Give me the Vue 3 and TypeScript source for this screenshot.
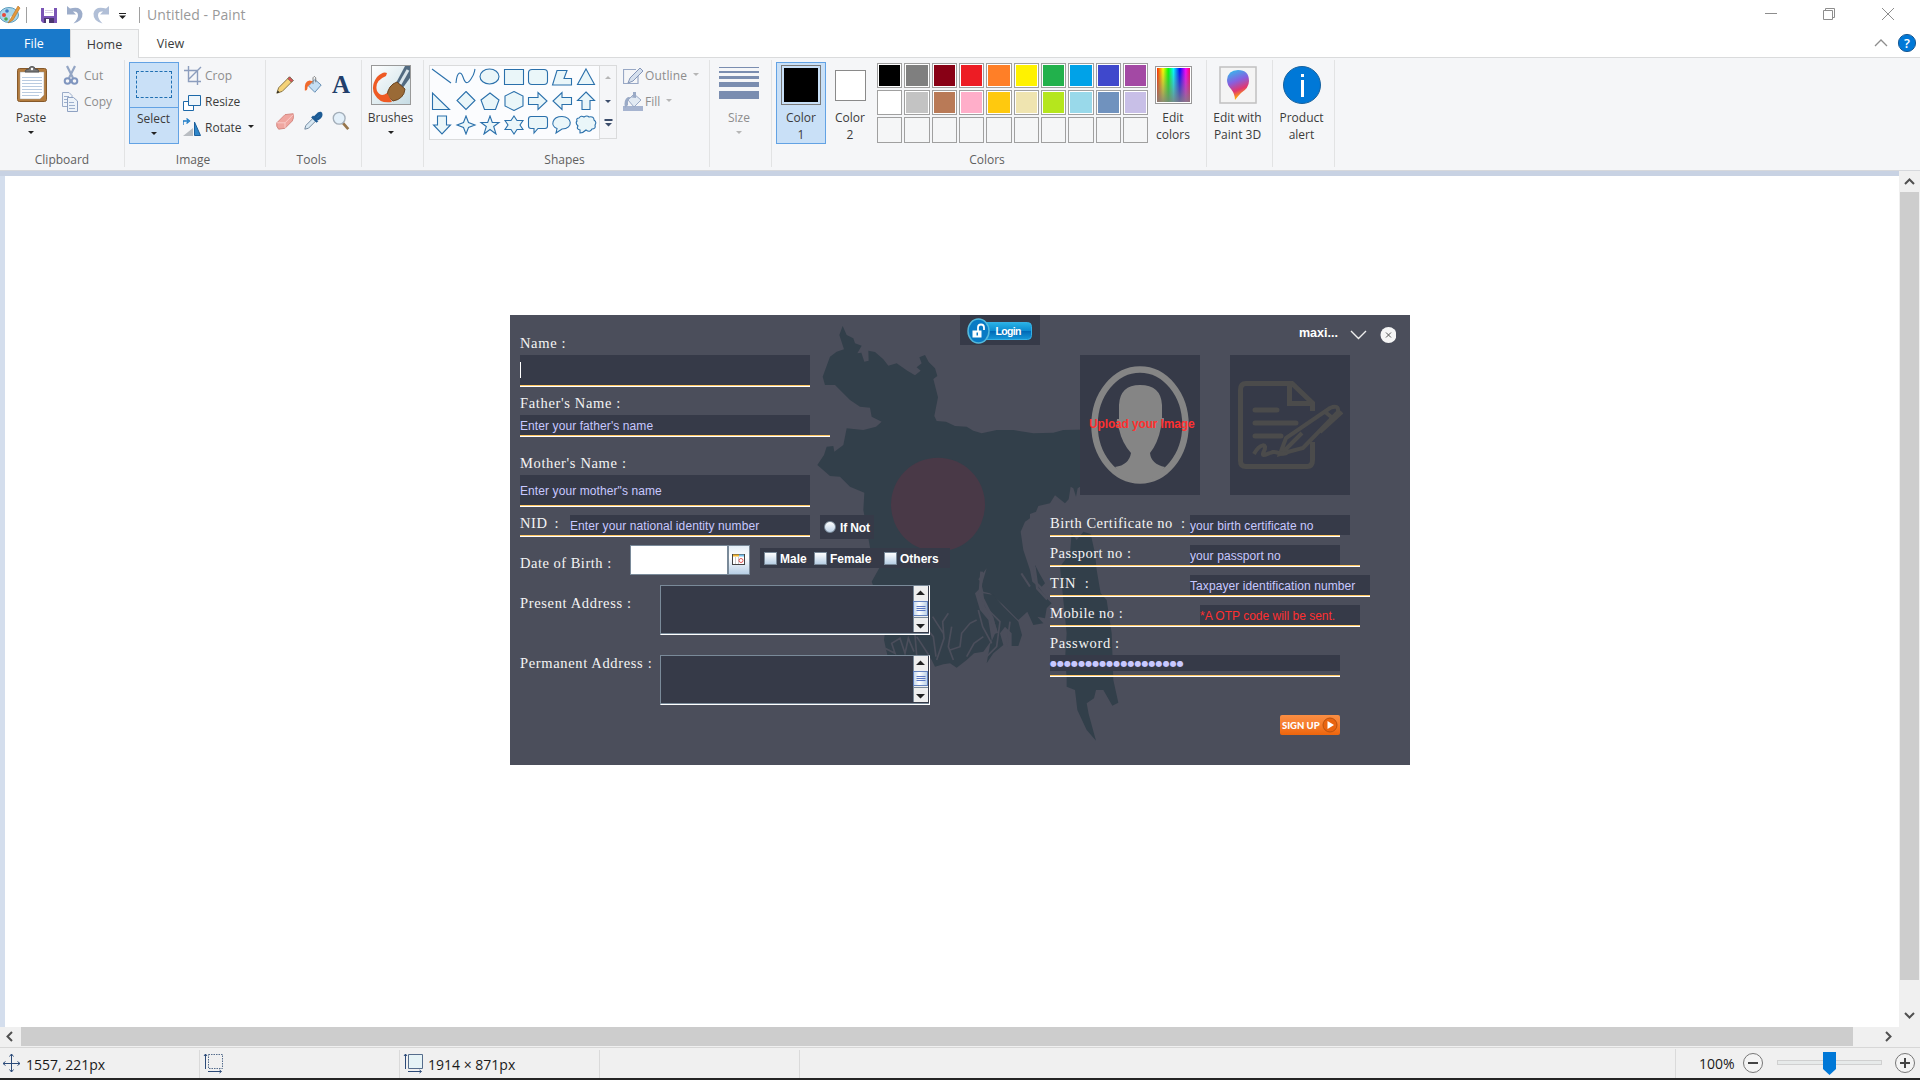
<script setup lang="ts">
interface Field {
  label: string
  hint: string
  fieldX: number
  fieldW: number
  lineW: number
  tight?: boolean
  spread?: boolean
  warn?: boolean
}

const colors: string[][] = [
  ['#000000', '#7f7f7f', '#880015', '#ed1c24', '#ff7f27', '#fff200', '#22b14c', '#00a2e8', '#3f48cc', '#a349a4'],
  ['#ffffff', '#c3c3c3', '#b97a57', '#ffaec9', '#ffc90e', '#efe4b0', '#b5e61d', '#99d9ea', '#7092be', '#c8bfe7'],
  ['', '', '', '', '', '', '', '', '', ''],
]

const shapes: string[] = [
  'M1 2L20 16',
  'M1 16C2 4 6 4 8 10S12 18 16 12S19 6 20 2',
  'M1 9.500a9.500 7.500 0 1 0 19 0a9.500 7.500 0 1 0 -19 0',
  'M1.500 2.500H20.500V17.500H1.500Z',
  'M5 2.500H17Q20.500 2.500 20.500 6V14Q20.500 17.500 17 17.500H5Q1.500 17.500 1.500 14V6Q1.500 2.500 5 2.500Z',
  'M6 3.500H16L13 11.500H20.500V18H1.500Z',
  'M11 2L19.500 17.500H2.500Z',
  'M1.500 2V18.500H18.500Z',
  'M11 0.500L20 9.500L11 18.500L2 9.500Z',
  'M11 2L20 9L16.500 18.500H5.500L2 9Z',
  'M11 0.500L20 5V15L11 19.500L2 15V5Z',
  'M1.500 6.500H11V1.500L20 10L11 18.500V13.500H1.500Z',
  'M20.500 6.500H11V1.500L2 10L11 18.500V13.500H20.500Z',
  'M11 1L19.500 9.500H15V18.500H7V9.500H2.500Z',
  'M6.500 1H15.500V10H19.500L11 19L2.500 10H6.500Z',
  'M11 1L13.500 7.500L20 10L13.500 12.500L11 19L8.500 12.500L2 10L8.500 7.500Z',
  'M11 1L13.300 7.500H20L14.700 11.500L17 19L11 14.500L5 19L7.300 11.500L2 7.500H8.700Z',
  'M11 1L14 5.500H20L17 10L20 14.500H14L11 19L8 14.500H2L5 10L2 5.500H8Z',
  'M4 1.500H18Q20.500 1.500 20.500 4V11Q20.500 13.500 18 13.500H11L7 18V13.500H4Q1.500 13.500 1.500 11V4Q1.500 1.500 4 1.500Z',
  'M5 18L6 13.500C-1 11 1 1.500 11 1.500S23 13.500 11 14Z',
  'M4 3Q6 0 9 2Q12 0 14 2Q19 1 19 5Q22 7 20 10Q21 14 17 14Q15 18 11 15Q8 18 5 18L5 15Q1 14 3 11Q0 8 2 6Q1 3 4 3Z',
]

const rightFields: Field[] = [
  { label: 'Birth Certificate no  :', hint: 'your birth certificate no', fieldX: 140, fieldW: 160, lineW: 290, tight: true },
  { label: 'Passport no :', hint: 'your passport no', fieldX: 140, fieldW: 150, lineW: 310, tight: true },
  { label: 'TIN  :', hint: 'Taxpayer identification number', fieldX: 140, fieldW: 180, lineW: 320 },
  { label: 'Mobile no :', hint: '*A OTP code will be sent.', fieldX: 150, fieldW: 160, lineW: 310, tight: true, warn: true },
]

const addresses: string[] = ['Present Address :', 'Permanent Address :']
const genders: { name: string; width: number }[] = [
  { name: 'Male', width: 50 },
  { name: 'Female', width: 70 },
  { name: 'Others', width: 66 },
]
const passwordDots = '●'.repeat(19)
</script>

<template>
  <div class="window">
    <header class="titlebar">
      <svg class="quick" width="140" height="29" viewBox="0 0 140 29">
        <ellipse cx="9" cy="15" rx="9.500" ry="7.500" fill="#a9d6ea" stroke="#5c9dbd" />
        <circle cx="4" cy="15" r="2" fill="#e8493a" /><circle cx="7" cy="11" r="1.800" fill="#3e76c4" />
        <circle cx="6" cy="19" r="1.800" fill="#49a84f" /><circle cx="12" cy="18" r="2" fill="#fff" />
        <path d="M18 6L10 20L8 23L13 20L20 8Z" fill="#e49a3d" stroke="#b66f22" stroke-width=".6" />
        <path d="M26.500 7V23M139.500 7V23" stroke="#a0a0a0" />
        <path d="M41 8H57V23H43L41 21Z" fill="#7a55b5" /><rect x="44" y="8" width="10" height="8" fill="#fff" />
        <path d="M45 10.500H53M45 12.500H53" stroke="#d8d0e4" /><rect x="44" y="18" width="10" height="5" fill="#4b3770" /><rect x="46" y="19" width="3" height="4" fill="#fff" />
        <path d="M67 6V14.500H76L73 11.500Q78 11 78 15.500Q78 19 73.500 23.500Q83 21 82.500 13.500Q81 5.500 70 8.500Z" fill="#9dadca" />
        <path d="M109 6V14.500H100L103 11.500Q98 11 98 15.500Q98 19 102.500 23.500Q93 21 93.500 13.500Q95 5.500 106 8.500Z" fill="#b1bfd7" />
        <path d="M119 13.500H126" stroke="#222" /><path d="M119 15.500H126L122.500 19Z" fill="#222" />
      </svg>
      <span class="title">Untitled - Paint</span>
      <svg class="controls" width="150" height="29" viewBox="0 0 150 29" fill="none" stroke="#8d8d8d">
        <path d="M5 13.500H17M63.500 10.500H72.500V19.500H63.500ZM65.500 10V8.500H74.500V17.500H73M122 8L134 20M134 8L122 20" />
      </svg>
    </header>

    <nav class="tabs">
      <span class="tab file">File</span>
      <span class="tab home">Home</span>
      <span class="tab view">View</span>
      <svg class="help" width="50" height="28" viewBox="0 0 50 28">
        <path d="M5 17L11 11L17 17" fill="none" stroke="#8d8d8d" stroke-width="1.300" />
        <circle cx="37" cy="14" r="8.600" fill="#0078d7" stroke="#1a5a94" />
        <text x="37" y="19" text-anchor="middle" fill="#fff" font-size="13" font-weight="600">?</text>
      </svg>
    </nav>

    <section class="ribbon">
      <div class="group" style="width: 125px">
        <div class="tools-row">
          <div class="big paste">
            <svg width="34" height="44" viewBox="0 0 34 44">
              <rect x="3.500" y="5.500" width="29" height="33" rx="2" fill="#b47c3e" stroke="#86592a" />
              <path d="M6 9H30V32L26 36H6Z" fill="#fff" stroke="#999" stroke-width=".5" />
              <path d="M8 14.500H28M8 17.500H28M8 20.500H28M8 23.500H28M8 26.500H28M8 29.500H28M8 32.500H25" stroke="#b9cbe0" />
              <path d="M11 9Q11 6 15 6Q15 3.500 18 3.500T21 6Q25 6 25 9Z" fill="#777" stroke="#555" />
              <circle cx="18" cy="6" r="1.200" fill="#fff" />
            </svg>
            <span>Paste</span><i class="arrow"></i>
          </div>
          <div class="small-list dim">
            <span><svg width="22" height="22" viewBox="0 0 22 22"><path d="M5 1L11 13M13 1L7 13" stroke="#93a5c4" stroke-width="2.200" /><circle cx="5.500" cy="16" r="2.800" fill="none" stroke="#8096bf" stroke-width="2" /><circle cx="12.500" cy="16" r="2.800" fill="none" stroke="#8096bf" stroke-width="2" /></svg>Cut</span>
            <span><svg width="22" height="22" viewBox="0 0 22 22"><path d="M.5 1.500H7L10 4.500V15.500H.5Z" fill="#f1f5fa" stroke="#9bacc8" /><path d="M5.500 6.500H11.500L15.500 10V20.500H5.500Z" fill="#edf3f9" stroke="#8ea1c2" /><path d="M2 5.500H7M2 8.500H5M2 11.500H5M7 11.500H12M7 14.500H13M7 17.500H13" stroke="#9db0cd" /></svg>Copy</span>
          </div>
        </div>
        <div class="caption">Clipboard</div>
      </div>

      <div class="group" style="width: 141px">
        <div class="tools-row">
          <div class="select">
            <div class="select-top"><i></i></div>
            <span>Select</span><i class="arrow"></i>
          </div>
          <div class="small-list image">
            <span class="dim"><svg width="22" height="22" viewBox="0 0 22 22" fill="none" stroke="#8c9dbd"><path d="M5.500 1V16.500H18M1 5.500H14.500V20M6 14L18 2" stroke-width="1.400" /></svg>Crop</span>
            <span><svg width="22" height="22" viewBox="0 0 22 22" stroke="#1c68a8"><path d="M.5 10.500H10.500V19.500H.5Z" fill="#fff" /><path d="M5.500 4.500H17.500V14.500H5.500Z" fill="#eef5fa" /></svg>Resize</span>
            <span><svg width="22" height="22" viewBox="0 0 22 22"><path d="M0 19L10 11V19Z" fill="#b9bdc2" /><path d="M11.500 5V18.500H17.500Z" fill="#2f86c9" stroke="#1c5f9c" /><path d="M0 8V4H5M3.500 1.500L6.500 4L3.500 6.500" fill="none" stroke="#1c7bc6" stroke-width="1.400" /></svg>Rotate<i class="arrow side"></i></span>
          </div>
        </div>
        <div class="caption shifted">Image</div>
      </div>

      <div class="group" style="width: 96px">
        <div class="tool-grid">
          <svg viewBox="0 0 22 22"><path d="M2 20L4 14L16 2L20 6L8 18Z" fill="#f5d277" stroke="#7d6a3a" /><path d="M14 4L16 2L20 6L18 8Z" fill="#d85757" stroke="#555" stroke-width=".6" /><path d="M2 20L3 17L5 19Z" fill="#222" /></svg>
          <svg viewBox="0 0 22 22"><path d="M6 12L13 5L20 11L13 19Z" fill="#c6e0f5" stroke="#5c86ad" /><path d="M7 6Q1 7 2 17Q5 18 5 13L11 7Z" fill="#f06a2c" /><path d="M11 10V3Q12.500 0 14 3V8" fill="none" stroke="#777" /></svg>
          <span class="letter">A</span>
          <svg viewBox="0 0 22 22"><path d="M2 13L11 4L20 3Q21 8 19 11L11 19L4 20Q1 17 2 13Z" fill="#f0a6a0" stroke="#d2827b" /><path d="M2 13L11 13L11 19M11 13L20 4" stroke="#fbd0cc" fill="none" /></svg>
          <svg viewBox="0 0 22 22"><path d="M2 20L3 16L11 8L14 11L6 19Z" fill="#d8e8f3" stroke="#6b8299" /><path d="M10 6L16 12M12 8L17 3Q20 1 20 4T14 10Z" fill="#2570b0" stroke="#1d5b94" stroke-width="3" /></svg>
          <svg viewBox="0 0 22 22"><path d="M13 13L19 20" stroke="#96754b" stroke-width="3" /><circle cx="9" cy="8" r="6.500" fill="#e3f0fa" stroke="#a3aeb9" stroke-width="1.500" /></svg>
        </div>
        <div class="caption shifted">Tools</div>
      </div>

      <div class="group" style="width: 62px">
        <div class="big brushes">
          <svg width="40" height="44" viewBox="0 0 40 44">
            <defs><linearGradient id="brush-bg" x1="0" y1="0" x2="1" y2="1"><stop offset="0" stop-color="#fff" /><stop offset="1" stop-color="#c6dce4" /></linearGradient></defs>
            <rect x=".5" y="2.500" width="39" height="39" fill="url(#brush-bg)" stroke="#999" />
            <path d="M25 20L34 3H39V15L31 26Z" fill="#526a80" /><path d="M29 21L37 7" stroke="#d9e4ea" stroke-width="3" />
            <path d="M16 33Q17 22 26 19L34 26Q33 36 22 38Z" fill="#9a6a36" stroke="#6b4520" />
            <path d="M16 10Q12 8 6 14Q-1 24 4 32Q9 41 21 39L16 30Q10 35 6 28Q3 18 15 13Z" fill="#ee5a24" />
          </svg>
          <span>Brushes</span><i class="arrow"></i>
        </div>
      </div>

      <div class="group" style="width: 286px">
        <div class="tools-row shapes-row">
          <div class="shape-box">
            <svg v-for="(d, i) in shapes" :key="i" viewBox="0 0 22 20" :fill="i < 2 ? 'none' : '#eaf6f9'" stroke="#2a70ab" stroke-width="1.100"><path :d="d" /></svg>
          </div>
          <div class="shape-scroll">
            <i class="arrow up"></i><i class="arrow navy"></i>
            <svg width="9" height="8" viewBox="0 0 9 8" fill="#3c4d6b"><path d="M.5 0H8.500V2H.5ZM1 4H8L4.500 7.500Z" /></svg>
          </div>
          <div class="small-list outline dim">
            <span><svg width="22" height="22" viewBox="0 0 22 22"><path d="M13 4.500H.5V18.500H15V9" fill="none" stroke="#98a8c5" stroke-width="1.200" /><path d="M5 18L7 13L17 3L20 6L10 16Z" fill="#d6e0ed" stroke="#8496b8" /></svg>Outline<i class="arrow grey"></i></span>
            <span><svg width="22" height="22" viewBox="0 0 22 22"><path d="M0 15H20V20H0Z" fill="#a6b4d0" /><path d="M5 9L11 3L18 9L11 16Z" fill="#e2eaf3" stroke="#9aaac6" /><path d="M5 6Q0 9 2 17L5 14V9L10 5V1H13V7" fill="#9aaac6" /></svg>Fill<i class="arrow grey"></i></span>
          </div>
        </div>
        <div class="caption shapes-caption">Shapes</div>
      </div>

      <div class="group" style="width: 62px">
        <div class="big size dim">
          <svg width="40" height="44" viewBox="0 0 40 44" fill="#7a8db0"><path d="M0 4h40v1H0zM0 8h40v2H0zM0 13h40v3H0zM0 19h40v5H0zM0 28h40v8H0z" /></svg>
          <span>Size</span><i class="arrow grey"></i>
        </div>
      </div>

      <div class="group" style="width: 435px">
        <div class="tools-row">
          <div class="color-btn active"><div class="chip c1"><i></i></div><span>Color<br />1</span></div>
          <div class="color-btn"><div class="chip c2"></div><span>Color<br />2</span></div>
          <div class="palette">
            <template v-for="(row, r) in colors" :key="r">
              <i v-for="(c, k) in row" :key="k" class="cell"><b :style="{ background: c || '#f5f6f7' }" :class="{ blank: !c }"></b></i>
            </template>
          </div>
          <div class="wide-btn edit-colors"><i class="spectrum"></i><span>Edit<br />colors</span></div>
        </div>
        <div class="caption shifted">Colors</div>
      </div>

      <div class="group" style="width: 66px">
        <div class="wide-btn pulled">
          <svg width="38" height="38" viewBox="0 0 38 38">
            <defs>
              <linearGradient id="p3d" x1="0" y1="0" x2=".3" y2="1"><stop offset="0" stop-color="#28c7ee" /><stop offset=".45" stop-color="#8660e0" /><stop offset=".75" stop-color="#e2366f" /><stop offset="1" stop-color="#ffb400" /></linearGradient>
            </defs>
            <rect x="1" y="1" width="36" height="36" fill="#f4f4f4" stroke="#c0c0c0" stroke-width="1.500" />
            <path d="M19 4Q30 4 30 15Q30 22 22 27Q19 30 16 34Q16 28 12 23Q8 19 8 14Q9 4 19 4Z" fill="url(#p3d)" />
          </svg>
          <span>Edit with<br />Paint 3D</span>
        </div>
      </div>

      <div class="group" style="width: 62px">
        <div class="wide-btn pulled">
          <svg width="38" height="38" viewBox="0 0 38 38"><circle cx="19" cy="19" r="18.500" fill="#0078d7" stroke="#17629f" /><path d="M19.500 8V11M19.500 14V31" stroke="#fff" stroke-width="3" /></svg>
          <span>Product<br />alert</span>
        </div>
      </div>
    </section>

    <main class="workspace">
      <div class="canvas">
        <div class="dialog">
          <svg class="map" width="400" height="450" viewBox="0 15 1200 1350">
            <path fill="#323f4a" d="M128 48L140 75L160 85L165 100L185 107L172 130L184 128L193 155L206 152L205 122L225 126L250 148L265 167L290 160L322 182L345 196L362 182L350 172L365 160L358 142L375 135L386 156L405 175L412 198L400 207L414 262L403 318L410 333L438 335L465 348L500 350L520 362L545 370L590 360L640 360L700 370L760 368L790 360L900 358V530L840 530L833 535L828 560L820 535L812 530L806 568L795 580L780 568L765 556L750 580L715 588L708 605L690 612V625L675 635L662 665L670 720L690 780L697 815L715 830L745 870L755 880L740 895L735 925L712 920L730 940L700 945L682 905L655 930L610 885L570 850L550 845L545 825L560 775L535 808L550 825L525 850L540 900L565 930L575 990L550 1025L522 1030L500 1050L470 1073L450 1060L430 1063L405 1070L395 1050L385 1035H262L252 990L260 930L215 815L240 770L215 740L190 600L193 548L150 530L120 500L90 498L52 465L72 435L80 410L100 408L103 425L130 405L140 355L190 360L228 350L245 335L215 320L210 293L180 290L150 270L105 225L75 225L68 200L90 140L110 125L132 118L118 75Z" />
            <path fill="#323f4a" d="M550 850L580 855L610 890L655 935L666 975L655 1008L635 1008L635 970L615 950L600 970L610 1005L580 1030L560 1060L570 1005L590 960L580 920L555 890ZM815 670L830 690L850 665L872 672L885 730L890 780L902 850L920 870L935 970L940 1110L955 1178L937 1187L910 1140L888 1140L882 1165L860 1180L866 1212L888 1292L860 1260L832 1200L825 1140L800 1130V1100L795 1050L800 970L780 770L810 730ZM705 765L718 790L735 820L725 830L705 810Z" />
            <g fill="none" stroke="#4b4e5b" stroke-width="5">
              <path d="M410 1050L432 985L428 935L445 910M430 970L398 920M460 1050L445 1010L455 950M450 1020L480 1010L485 970L510 940L530 930M386 1035L360 995L350 980M375 950L400 980L408 1040M345 975L350 1035M255 1015L285 1030L275 1000L300 985L315 1030L325 985L342 1025M500 1040L522 1000L550 980M565 900L600 935L590 1010L560 1040M535 900L548 950L575 1000M630 935L620 1010" />
              <path d="M545 785L540 850L570 910L590 970" stroke-width="9" />
              <path d="M690 830L664 790" stroke-width="6" /><path d="M703 770L712 835L742 868" stroke-width="8" />
            </g>
            <circle cx="414" cy="584" r="141" fill="#493947" />
          </svg>

          <div class="left-col">
            <label class="lbl">Name :</label>
            <div class="field tall"><i class="caret"></i></div><div class="line"></div>
            <label class="lbl father">Father's Name :</label>
            <div class="field">Enter your father's name</div><div class="line long"></div>
            <label class="lbl mother">Mother's Name :</label>
            <div class="field tall">Enter your mother"s name</div><div class="line"></div>
            <div class="nid-row">
              <div class="nid">
                <div class="inline"><label class="lbl">NID  :</label><div class="field">Enter your national identity number</div></div>
                <div class="line"></div>
              </div>
              <div class="ifnot"><i></i>If Not</div>
            </div>
            <div class="dob-row">
              <label class="lbl tight">Date of Birth :</label>
              <div class="date"></div>
              <div class="date-btn">
                <svg width="14" height="12" viewBox="0 0 14 12"><rect x=".5" y=".5" width="12" height="10" fill="#fff" stroke="#444" /><path d="M1 1.500H7" stroke="#f2b632" stroke-width="2" /><path d="M7 1.500H12" stroke="#79c1ec" stroke-width="2" /><path d="M3.500 3V10M6.500 3V10" stroke="#ccc" /><circle cx="9" cy="6.500" r="2" fill="none" stroke="#e35555" /></svg>
              </div>
              <div class="genders"><span v-for="g in genders" :key="g.name" :style="{ width: g.width + 'px' }"><i></i>{{ g.name }}</span></div>
            </div>
            <div v-for="a in addresses" :key="a" class="address-row">
              <label class="lbl">{{ a }}</label>
              <div class="area">
                <svg width="15" height="46" viewBox="0 0 15 46">
                  <defs><linearGradient id="metal" x1="0" x2="1" y1="0" y2="0"><stop offset="0" stop-color="#c3d7ec" /><stop offset=".4" stop-color="#fff" /><stop offset="1" stop-color="#b8cfe5" /></linearGradient></defs>
                  <rect width="15" height="46" fill="#eee" /><path d="M.5 46V0" stroke="#7a8a99" /><path d="M3 9L7.500 4.500L12 9ZM3 38L7.500 42.500L12 38Z" fill="#222" />
                  <rect x=".5" y="15.500" width="14" height="14" fill="url(#metal)" stroke="#6382bf" /><path d="M3.500 20.500H12.500M3.500 22.500H12.500M3.500 24.500H12.500" stroke="#5b78c4" /><path d="M1 31.500H15" stroke="#7a8a99" />
                </svg>
              </div>
            </div>
          </div>

          <div class="login">
            <svg width="80" height="30" viewBox="0 0 80 30">
              <defs><linearGradient id="login-bg" x1="0" y1="0" x2="0" y2="1"><stop offset="0" stop-color="#29b3e6" /><stop offset=".48" stop-color="#0d8bd0" /><stop offset=".5" stop-color="#0067b5" /><stop offset="1" stop-color="#1598d8" /></linearGradient></defs>
              <rect x="20" y="7.500" width="51.500" height="17" rx="4" fill="url(#login-bg)" stroke="#35b0e5" />
              <ellipse cx="18.500" cy="16" rx="10.500" ry="12" fill="#087ac4" stroke="#54b9dc" stroke-width="1.500" />
              <rect x="12.500" y="15.500" width="9" height="7" fill="#fff" /><path d="M18 16V12.500Q18 9.500 21 9.500T24 12.500V15" fill="none" stroke="#fff" stroke-width="1.800" /><rect x="16.500" y="17.500" width="1.500" height="3" fill="#087ac4" />
              <text x="48.500" y="20" text-anchor="middle" fill="#fff" font-size="10.500" font-weight="700" textLength="26">Login</text>
            </svg>
          </div>

          <div class="right-col">
            <div class="user-row">
              <span>maxi...</span>
              <svg width="46" height="20" viewBox="0 0 46 20"><path d="M1 6L8.500 13.500L16 6" fill="none" stroke="#eee" stroke-width="1.400" /><circle cx="38.500" cy="10" r="8" fill="#f5f5f5" /><path d="M36 7.500L41 12.500M41 7.500L36 12.500" stroke="#555" /></svg>
            </div>
            <div class="pictures">
              <div class="pic">
                <svg width="120" height="140" viewBox="0 0 120 140">
                  <ellipse cx="60" cy="70" rx="45.500" ry="55.500" fill="none" stroke="#858585" stroke-width="6.500" />
                  <path d="M60 30Q81 30 82 50V63H84Q84 68 81 72Q78 88 70 98Q71 109 85 112Q74 127 60 127T35 112Q49 110 51 98Q42 88 39 74Q36 69 37 64H39V50Q40 30 60 30Z" fill="#858585" />
                </svg>
                <strong>Upload your Image</strong>
              </div>
              <div class="pic">
                <svg width="120" height="140" viewBox="0 0 120 140" fill="none" stroke="#4b4b4b" stroke-width="5">
                  <path d="M82.500 87V105Q82.500 111.500 77 111.500H16Q10.500 111.500 10.500 106V35Q10.500 28.500 16 28.500H62L82.500 48V56M59.500 29V48.500H82" />
                  <path d="M25 55H47M25 68H66M25 81H51" stroke-linecap="round" />
                  <path d="M50 99L56 83L100 53Q109 49 108 57L73 93ZM94 56L105 65M53 97L72 78M90 77L112 57" stroke-width="4" />
                  <path d="M24 99C30 88 38 88 34 96S38 98 43 97S50 101 57 98" stroke-width="4" />
                </svg>
              </div>
            </div>
            <div v-for="f in rightFields" :key="f.label" class="right-row">
              <div class="inline">
                <label class="lbl" :class="{ tight: f.tight }" :style="{ width: f.fieldX + 'px' }">{{ f.label }}</label>
                <div class="field" :class="{ warn: f.warn }" :style="{ width: f.fieldW + 'px' }">{{ f.hint }}</div>
              </div>
              <div class="line" :style="{ width: f.lineW + 'px' }"></div>
            </div>
            <label class="lbl">Password :</label>
            <div class="field password">{{ passwordDots }}</div><div class="line pw-line"></div>
            <div class="signup">SIGN UP<svg width="16" height="16" viewBox="0 0 16 16"><circle cx="8" cy="8" r="7" fill="#ea6410" stroke="#b9520f" /><path d="M5.500 4L12 8L5.500 12Z" fill="#fff" /></svg></div>
          </div>
        </div>
      </div>
      <div class="vscroll">
        <svg width="20" height="21" viewBox="0 0 20 21"><path d="M5 13L9.500 8.500L14 13" /></svg><i></i>
        <svg width="20" height="23" viewBox="0 0 20 23"><path d="M5 9L9.500 13.500L14 9" /></svg>
      </div>
    </main>
    <div class="hscroll">
      <svg width="21" height="19" viewBox="0 0 21 19"><path d="M12 5L7.500 9.500L12 14" /></svg><i></i>
      <svg width="67" height="19" viewBox="0 0 67 19"><path d="M33 5L37.500 9.500L33 14" /></svg>
    </div>
    <footer class="status">
      <div class="stat"><svg width="24" height="24" viewBox="0 0 24 24" fill="none" stroke="#2b4a78"><path d="M10.500 4V22M2 13.500H19M8.500 6.500L10.500 4L12.500 6.500M8.500 19.500L10.500 22L12.500 19.500M4.500 11.500L2 13.500L4.500 15.500M16.500 11.500L19 13.500L16.500 15.500" /></svg>1557, 221px</div>
      <div class="stat"><svg width="26" height="24" viewBox="0 0 26 24" fill="none" stroke="#2b4a78"><path d="M4.500 4V19M3 6L4.500 4L6 6M7 21.500H20M18.500 20L20.500 21.500L18.500 23" /><path d="M7.500 4.500H21.500V18.500H7.500Z" stroke-dasharray="1.500 1" stroke="#556c8c" /></svg></div>
      <div class="stat"><svg width="26" height="24" viewBox="0 0 26 24" fill="none" stroke="#2b4a78"><path d="M4.500 4V19M3 6L4.500 4L6 6M7 21.500H20M18.500 20L20.500 21.500L18.500 23" /><path d="M7.500 4.500H21.500V18.500H7.500Z" fill="#e6f3f6" stroke="#556c8c" /></svg>1914 × 871px</div>
      <div class="stat"></div>
      <div class="zoom">
        <span>100%</span>
        <svg width="180" height="30" viewBox="0 0 180 30">
          <g fill="#f4f4f4" stroke="#777"><circle cx="13" cy="15" r="9.500" /><circle cx="165" cy="15" r="9.500" /></g>
          <path d="M8 15H18M160 15H170M165 10V20" stroke="#444" stroke-width="2" />
          <rect x="37.500" y="12.500" width="104" height="4" fill="#e7eaea" stroke="#d0d0d0" />
          <path d="M83 4H96V21L89.500 27L83 21Z" fill="#0078d7" />
        </svg>
      </div>
    </footer>
  </div>
</template>

<style>
body {
  margin: 0;
  overflow: hidden;
}
</style>

<style scoped>
* {
  box-sizing: border-box;
}
.window {
  width: 1920px;
  height: 1080px;
  display: flex;
  flex-direction: column;
  background: #fff;
  font-family: "Open Sans", "Noto Sans", sans-serif;
  font-size: 12px;
  color: #3b3b3b;
  overflow: hidden;
}
svg {
  display: block;
  flex: none;
}
i {
  display: block;
  font-style: normal;
}
.titlebar {
  height: 29px;
  display: flex;
}
.title {
  margin-left: 7px;
  font-size: 14px;
  letter-spacing: 0.080px;
  line-height: 29px;
  color: #999;
}
.controls {
  margin-left: auto;
  margin-right: 10px;
}
.tabs {
  height: 29px;
  display: flex;
  border-bottom: 1px solid #dadbdc;
}
.tab {
  text-align: center;
  line-height: 29px;
  font-size: 12.500px;
}
.file {
  width: 70px;
  padding-right: 2px;
  background: #1979ca;
  color: #fff;
}
.home {
  width: 69px;
  height: 29px;
  background: #f5f6f7;
  border: 1px solid #dadbdc;
  border-bottom: 0;
}
.view {
  width: 63px;
}
.help {
  margin-left: auto;
}
.ribbon {
  height: 113px;
  display: flex;
  background: #f5f6f8;
  border-bottom: 1px solid #d6d8dc;
  padding: 2px 0 3px;
}
.group {
  height: 107px;
  border-right: 1px solid #e2e3e4;
  display: flex;
  flex-direction: column;
}
.caption {
  margin-top: auto;
  text-align: center;
  line-height: 18px;
  height: 16px;
  color: #5f5f5f;
}
.caption.shifted {
  padding-right: 4px;
}
.shapes-caption {
  padding-right: 4px;
}
.tools-row {
  display: flex;
}
.arrow {
  width: 0;
  height: 0;
  border: 3.500px solid transparent;
  border-top-color: #222;
  border-bottom: 0;
}
.arrow.grey {
  border-top-color: #b6b6b6;
}
.big {
  display: flex;
  flex-direction: column;
  align-items: center;
  padding-top: 3px;
}
.big span {
  line-height: 21px;
}
.big .arrow {
  margin-top: 3px;
}
.paste {
  width: 62px;
}
.brushes {
  width: 61px;
  padding-right: 4px;
}
.size {
  width: 58px;
}
.dim {
  color: #8d8d8d;
}
.small-list {
  padding-top: 3px;
}
.small-list span {
  display: flex;
  align-items: center;
  height: 26px;
  line-height: 22px;
  white-space: nowrap;
}
.small-list .arrow {
  margin: -4px 0 0 6px;
}
.small-list.image {
  padding-left: 4px;
}
.select {
  margin: 2px 0 0 4px;
  width: 50px;
  height: 82px;
  background: #c9e0f7;
  border: 1px solid #62a2e4;
  display: flex;
  flex-direction: column;
  align-items: center;
}
.select-top {
  width: 100%;
  height: 45px;
  border-bottom: 1px solid #62a2e4;
  padding: 8px 6px;
}
.select-top i {
  width: 36px;
  height: 27px;
  border: 1px dashed #1f6fb2;
}
.select span {
  line-height: 21px;
  margin-left: -1px;
}
.select .arrow {
  margin: 3px 1px 0 0;
}
.tool-grid {
  display: grid;
  grid-template-columns: repeat(3, 20px);
  gap: 16px 8px;
  padding: 15px 0 0 9px;
}
.tool-grid svg {
  width: 20px;
  height: 20px;
}
.letter {
  height: 20px;
  font-family: "Liberation Serif", serif;
  font-size: 25px;
  font-weight: 700;
  line-height: 20px;
  text-align: center;
  color: #223f6b;
}
.shape-box {
  margin: 5px 0 0 5px;
  width: 171px;
  height: 75px;
  background: #fbfcfe;
  border: 1px solid #dadbdc;
  display: grid;
  grid-template-columns: repeat(7, 24px);
  grid-auto-rows: 24px;
  padding: 1px 1px;
}
.shape-box svg {
  width: 22px;
  height: 20px;
}
.shape-scroll {
  margin-top: 5px;
  width: 17px;
  height: 74px;
  border: 1px solid #dadbdc;
  border-left: 0;
  display: flex;
  flex-direction: column;
  align-items: center;
  padding-top: 10px;
  gap: 21px;
}
.shape-scroll svg {
  margin-top: -5px;
}
.arrow.up {
  border: 3.500px solid transparent;
  border-top: 0;
  border-bottom-color: #b6b6b6;
}
.arrow.navy {
  border-top-color: #3c4d6b;
}
.outline {
  padding-left: 6px;
}
.outline span:first-child {
  letter-spacing: 0.150px;
}
.color-btn {
  margin: 2px 0 0 4px;
  width: 50px;
  height: 82px;
  display: flex;
  flex-direction: column;
  align-items: center;
  text-align: center;
  line-height: 17px;
  border: 1px solid transparent;
}
.color-btn + .color-btn {
  margin-left: -1px;
}
.color-btn span {
  margin-top: auto;
}
.active {
  background: #c9e0f7;
  border-color: #62a2e4;
}
.chip.c1 {
  margin-top: 2px;
  width: 40px;
  height: 40px;
  border: 1px solid #7a7a7a;
  padding: 2px;
}
.chip.c1 i {
  height: 34px;
  background: #000;
}
.chip.c2 {
  margin-top: 7px;
  width: 31px;
  height: 31px;
  border: 1px solid #8a8a8a;
  background: #fff;
}
.palette {
  margin: 3px 0 0 2px;
  width: 272px;
  height: 81px;
  display: grid;
  grid-template-columns: repeat(10, 25.400px);
  grid-template-rows: 25px 25px 26px;
  gap: 2px 1.950px;
}
.cell {
  border: 1px solid #a0a0a0;
  padding: 1px;
  background: #fff;
}
.cell b {
  display: block;
  height: 100%;
}
.cell b.blank {
  outline: 1px solid #f5f6f7;
}
.wide-btn {
  width: 100%;
  display: flex;
  flex-direction: column;
  align-items: center;
  text-align: center;
  padding-top: 6px;
  line-height: 17px;
  white-space: nowrap;
}
.wide-btn.pulled {
  padding-right: 4px;
}
.wide-btn span {
  margin-top: 5px;
}
.edit-colors {
  width: 54px;
  margin-left: -3px;
}
.spectrum {
  width: 37px;
  height: 38px;
  border: 1px solid #999;
  outline: 1px solid #fff;
  outline-offset: -2px;
  background: linear-gradient(to bottom, rgba(128, 128, 128, 0), rgba(128, 128, 128, 0.9)), linear-gradient(to right, red, #ff0 20%, #0f0 35%, #0ff 50%, #00f 68%, #f0f 85%, #f03);
}
.workspace {
  height: 856px;
  display: flex;
  background: #c8d2e3;
}
.canvas {
  margin-top: 5px;
  width: 1899px;
  border-left: 5px solid #d4deed;
  background: #fff;
}
.vscroll {
  width: 21px;
  background: #f0f0f0;
  padding-left: 1px;
  display: flex;
  flex-direction: column;
}
.vscroll i {
  width: 19px;
  height: 788px;
  background: #cdcdcd;
  margin-bottom: 24px;
}
.vscroll path,
.hscroll path {
  fill: none;
  stroke: #505050;
  stroke-width: 2;
}
.hscroll {
  height: 20px;
  display: flex;
  background: #f0f0f0;
}
.hscroll i {
  width: 1832px;
  height: 19px;
  background: #cdcdcd;
}
.status {
  height: 33px;
  border-top: 1px solid #d7d7d7;
  border-bottom: 2px solid #252525;
  background: #f0f0f0;
  display: flex;
  font-size: 14px;
  color: #1a1a1a;
}
.stat {
  width: 200px;
  border-right: 1px solid #dadada;
  display: flex;
  align-items: center;
  padding-left: 1px;
  margin-top: 2px;
}
.stat svg {
  margin-bottom: 4px;
  margin-right: 1px;
}
.zoom {
  margin-left: auto;
  width: 245px;
  border-left: 1px solid #dadada;
  margin-top: 1px;
  display: flex;
}
.zoom span {
  width: 64px;
  padding-left: 23px;
  line-height: 30px;
}
.zoom svg {
  margin-top: -1px;
}
.dialog {
  position: relative;
  margin: 139px 0 0 505px;
  width: 900px;
  height: 450px;
  background: #4b4e5b;
  display: flex;
  font-family: "Liberation Sans", Arial, sans-serif;
}
.map {
  position: absolute;
  left: 290px;
  top: 0;
}
.left-col {
  position: relative;
  width: 450px;
  padding: 20px 0 0 10px;
}
.lbl {
  display: block;
  height: 20px;
  font-family: "Liberation Serif", serif;
  font-size: 14.500px;
  line-height: 16px;
  letter-spacing: 0.650px;
  color: #f4f4f4;
  white-space: pre;
  flex: none;
}
.lbl.tight {
  letter-spacing: 0.500px;
}
.field {
  width: 290px;
  height: 20px;
  line-height: 20px;
  padding-top: 1px;
  background: #363a48;
  color: #c8c8ff;
  font-size: 12px;
  letter-spacing: 0.090px;
  white-space: nowrap;
}
.field.tall {
  height: 30px;
  line-height: 30px;
}
.caret {
  width: 1px;
  height: 16px;
  margin-top: 6px;
  background: #fff;
}
.line {
  width: 290px;
  height: 2px;
  background: #fff;
  border-top: 1px solid #ffc864;
}
.line.long {
  width: 310px;
}
.father {
  margin-top: 8px;
}
.mother {
  margin-top: 18px;
}
.inline {
  display: flex;
}
.nid-row {
  margin-top: 8px;
  height: 24px;
  display: flex;
  gap: 10px;
}
.nid .lbl {
  width: 50px;
  word-spacing: 2.500px;
}
.nid .field {
  width: 240px;
}
.ifnot {
  width: 54px;
  background: #363a48;
  color: #fff;
  font-weight: 700;
  font-size: 12px;
  line-height: 26px;
  display: flex;
  padding-left: 4px;
  gap: 4px;
  letter-spacing: -0.150px;
}
.ifnot i {
  width: 12px;
  height: 12px;
  margin-top: 6px;
  border-radius: 50%;
  border: 1px solid #7a8a99;
  background: linear-gradient(#fff, #bcd0e5);
}
.dob-row {
  display: flex;
  margin-top: 6px;
  height: 30px;
}
.dob-row .lbl {
  width: 110px;
  margin-top: 10px;
}
.date {
  width: 98px;
  background: #fff;
  border: 1px solid #7a8a99;
  box-shadow: inset -1px -1px #fff;
}
.date-btn {
  width: 22px;
  border: 1px solid #7a8a99;
  background: linear-gradient(#e4eef7, #fff 40%, #b8cfe5);
  display: flex;
  align-items: center;
  justify-content: center;
}
.genders {
  margin: 3px 0 0 10px;
  width: 190px;
  height: 20px;
  padding-left: 4px;
  background: #363a48;
  color: #fff;
  font-weight: 700;
  font-size: 12px;
  line-height: 22px;
  display: flex;
}
.genders span {
  display: flex;
  gap: 3px;
  flex: none;
}
.genders i {
  width: 13px;
  height: 13px;
  margin-top: 4px;
  border: 1px solid #7a8a99;
  background: linear-gradient(#fff, #b8cfe5);
}
.address-row {
  display: flex;
  height: 50px;
  margin-top: 10px;
}
.address-row .lbl {
  width: 140px;
  margin-top: 10px;
}
.address-row + .address-row {
  margin-top: 20px;
}
.address-row + .address-row .lbl {
  margin-top: 0;
}
.area {
  width: 270px;
  background: #363a48;
  border: 1px solid #7a8a99;
  border-right-color: #fff;
  border-bottom-color: #fff;
  box-shadow: inset 0 -1px #7a8a99;
  display: flex;
  justify-content: flex-end;
  padding: 0 1px 1px 0;
}
.login {
  position: relative;
  width: 80px;
  height: 30px;
  background: #363a48;
}
.right-col {
  position: relative;
  margin-left: 10px;
  width: 350px;
}
.user-row {
  height: 40px;
  padding: 10px 12px 0 249px;
  display: flex;
  gap: 13px;
  color: #fff;
  font-size: 12.500px;
  font-weight: 700;
  line-height: 17px;
}
.user-row span {
  width: 38px;
}
.pictures {
  display: flex;
  gap: 30px;
  padding-left: 30px;
  margin-bottom: 20px;
}
.pic {
  position: relative;
  width: 120px;
  height: 140px;
  background: #363a48;
}
.pic strong {
  position: absolute;
  left: 9px;
  top: 61px;
  color: #ff3030;
  font-size: 12px;
  line-height: 16px;
  letter-spacing: -0.150px;
  white-space: nowrap;
}
.right-row {
  height: 30px;
}
.field.warn {
  color: #ff3030;
  letter-spacing: 0;
}
.password {
  height: 16px;
  line-height: 17px;
  padding-top: 0;
  font-family: "DejaVu Sans", sans-serif;
  font-size: 8px;
  letter-spacing: 0.060px;
}
.pw-line {
  margin-top: 4px;
}
.signup {
  margin: 38px 0 0 230px;
  width: 60px;
  height: 20px;
  border-radius: 2px;
  background: linear-gradient(#fa8e43, #f57c2c 50%, #ed650c);
  color: #fff;
  display: flex;
  align-items: center;
  justify-content: space-between;
  padding: 1px 2px;
  font-family: Lato, sans-serif;
  font-weight: 900;
  font-size: 9.500px;
}
</style>
